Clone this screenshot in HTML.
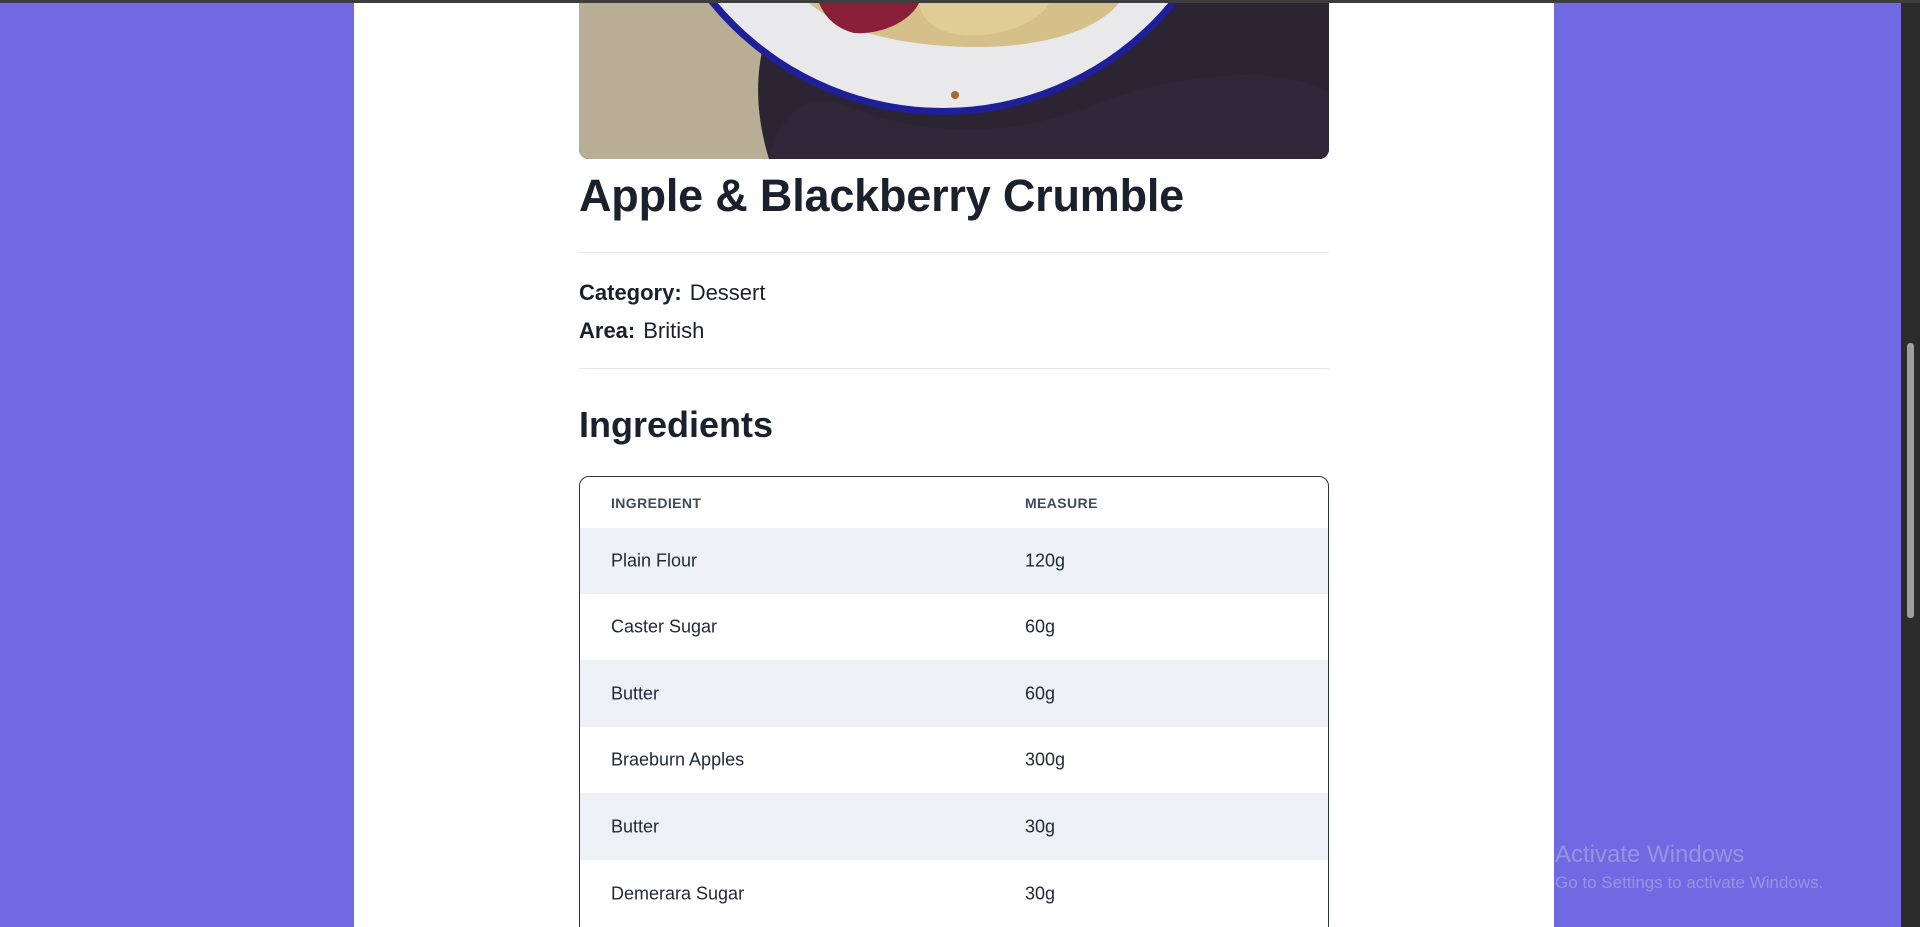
<!DOCTYPE html>
<html><head><meta charset="utf-8"><style>
*{margin:0;padding:0;box-sizing:border-box}
html,body{width:1920px;height:927px;overflow:hidden}
body{background:#7069e2;font-family:"Segoe UI","Liberation Sans",sans-serif;color:#1a202c;position:relative}
.topbar{position:absolute;left:0;top:0;width:1920px;height:3px;background:#3d3d3d}
.page{position:absolute;left:354px;top:3px;width:1200px;height:924px;background:#fff}
.scroll{position:absolute;left:1901px;top:3px;width:19px;height:924px;background:#2c2c2c}
.thumb{position:absolute;left:6px;top:340px;width:7px;height:275px;background:#9f9f9f;border-radius:3px}
.img{position:absolute;left:579px;top:3px;width:750px;height:156px;border-radius:0 0 10px 10px;overflow:hidden;background:#2a2332}
.h1{position:absolute;left:579px;top:166px;font-size:45px;font-weight:700;letter-spacing:-0.2px;line-height:60px;color:#1a202c}
.hr{position:absolute;left:579px;width:750px;height:1px;background:#e2e8f0}
.meta{position:absolute;left:579px;font-size:22px;line-height:30px}
.meta b{font-weight:700;margin-right:8px}
.h2{position:absolute;left:579px;top:402px;font-size:36px;font-weight:700;line-height:46px}
.table{position:absolute;left:579px;top:476px;width:750px;height:460px;border:1px solid #2d3340;border-radius:10px;overflow:hidden}
.row{position:absolute;left:0;width:748px;font-size:18px;color:#1f2937}
.row span{position:absolute;top:50%;transform:translateY(-50%)}
.c1{left:31px}.c2{left:445px}
.hd{font-size:14px;font-weight:700;color:#404a5a;letter-spacing:0.4px}
.s{background:#edf1f5}
.win{position:absolute;left:1555px;top:840px;color:rgba(200,200,230,0.45);font-size:24px;line-height:30px}
.win2{position:absolute;left:1555px;top:873px;color:rgba(200,200,230,0.45);font-size:17px}
</style></head><body>
<div class="topbar"></div>
<div class="page"></div>
<div class="img">
<svg width="750" height="156" viewBox="0 0 750 156">
<rect width="750" height="156" fill="#2b2433"/>
<path d="M0 0 H200 C180 40 170 90 190 156 H0 Z" fill="#b8ae96"/>
<path d="M190 156 C200 110 230 90 260 100 C330 130 420 140 520 100 C600 70 700 60 750 90 V156 Z" fill="#2e2738"/>
<circle cx="364" cy="-189" r="301" fill="#1f1f9a"/>
<circle cx="364" cy="-189" r="294" fill="#e9e8ea"/>
<path d="M230 0 H540 C520 25 470 45 390 44 C310 42 260 25 230 0 Z" fill="#d5c08a"/>
<path d="M240 0 H340 C330 20 300 32 275 30 C255 25 245 12 240 0 Z" fill="#8a1f3a"/>
<path d="M340 0 H470 C460 20 420 35 385 32 C355 30 342 15 340 0 Z" fill="#e0cc95"/>
<circle cx="376" cy="92" r="4" fill="#a86a2c"/>
</svg>
</div>
<div class="h1">Apple &amp; Blackberry Crumble</div>
<div class="hr" style="top:252px"></div>
<div class="meta" style="top:278px"><b>Category:</b>Dessert</div>
<div class="meta" style="top:316px"><b>Area:</b>British</div>
<div class="hr" style="top:368px"></div>
<div class="h2">Ingredients</div>
<div class="table">
<div class="row hd" style="top:0;height:51px"><span class="c1">INGREDIENT</span><span class="c2">MEASURE</span></div>
<div class="row s" style="top:51px;height:66px"><span class="c1">Plain Flour</span><span class="c2">120g</span></div>
<div class="row" style="top:117px;height:66px"><span class="c1">Caster Sugar</span><span class="c2">60g</span></div>
<div class="row s" style="top:183px;height:67px"><span class="c1">Butter</span><span class="c2">60g</span></div>
<div class="row" style="top:250px;height:66px"><span class="c1">Braeburn Apples</span><span class="c2">300g</span></div>
<div class="row s" style="top:316px;height:67px"><span class="c1">Butter</span><span class="c2">30g</span></div>
<div class="row" style="top:383px;height:67px"><span class="c1">Demerara Sugar</span><span class="c2">30g</span></div>
</div>
<div class="win">Activate Windows</div>
<div class="win2">Go to Settings to activate Windows.</div>
<div class="scroll"><div class="thumb"></div></div>
</body></html>
